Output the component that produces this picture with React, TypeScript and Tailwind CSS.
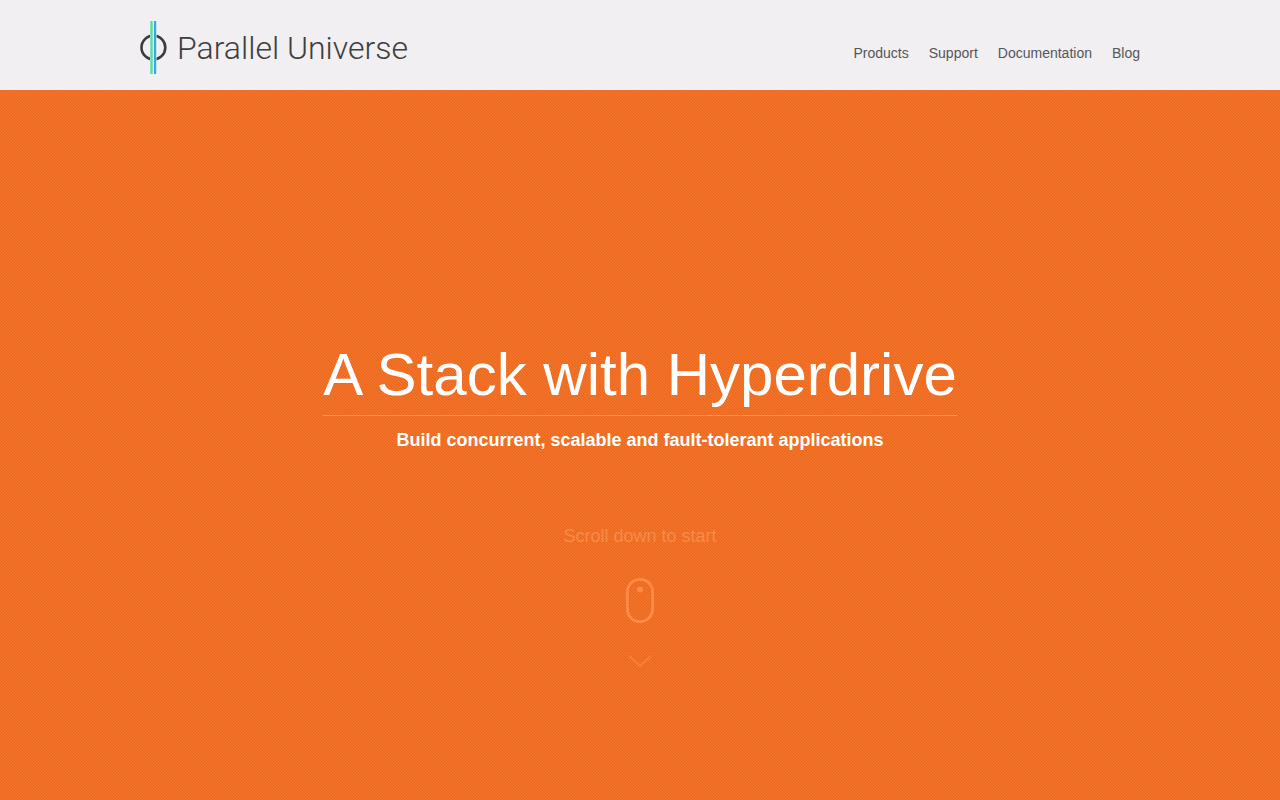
const navLinks = [
  { label: "Products", href: "#products" },
  { label: "Support", href: "#support" },
  { label: "Documentation", href: "#documentation" },
  { label: "Blog", href: "#blog" },
];

const Logo = () => (
  <a href="#home" className="flex items-center gap-2.5 text-[#3e3e3e]">
    <svg width="27" height="54" viewBox="0 0 27 54" fill="none" aria-hidden="true">
      <circle cx="13.4" cy="26.5" r="11.9" stroke="#3c3c3c" strokeWidth="2.6" />
      <rect x="10" y="0" width="6.6" height="53" fill="#f3f2f4" />
      <rect x="10.3" y="0" width="2.4" height="53" fill="#4fe0a4" />
      <rect x="14" y="0" width="2.2" height="53" fill="#35aadc" />
    </svg>
    <span className="whitespace-nowrap font-['Roboto',sans-serif] text-[32px] leading-9 font-light">
      Parallel Universe
    </span>
  </a>
);

const Header = () => (
  <header className="bg-[#f1eff2] px-5">
    <div className="mx-auto flex min-h-[90px] max-w-[1000px] items-center justify-between pt-1.5">
      <Logo />
      <nav className="flex gap-5 pt-2.5 text-sm text-[#55555b]">
        {navLinks.map((link) => (
          <a key={link.label} href={link.href} className="hover:underline">
            {link.label}
          </a>
        ))}
      </nav>
    </div>
  </header>
);

const Hero = () => (
  <main className="flex flex-1 flex-col items-center bg-[#f57322] bg-[linear-gradient(45deg,#e26627_25%,transparent_25%,transparent_58%,#e26627_58%,#e26627_75%,transparent_75%)] bg-[length:3px_3px] px-5 pt-[252px] pb-20 text-center text-white">
    <h1 className="border-b border-[#f79447] pb-[7px] text-[60px] leading-[66px]">
      A Stack with Hyperdrive
    </h1>
    <p className="mt-2.5 text-lg font-bold">
      Build concurrent, scalable and fault-tolerant applications
    </p>
    <p className="mt-17 text-lg text-[#f58c48]">Scroll down to start</p>
    <svg
      className="mt-7"
      width="28"
      height="45"
      viewBox="0 0 28 45"
      fill="none"
      aria-hidden="true"
    >
      <rect x="1.4" y="1.4" width="25.2" height="42.2" rx="12.6" stroke="#ff8b49" strokeWidth="2.8" />
      <circle cx="14" cy="11.5" r="3" fill="#ff8b49" />
    </svg>
    <svg
      className="mt-8"
      width="24"
      height="14"
      viewBox="0 0 24 14"
      fill="none"
      aria-hidden="true"
    >
      <path d="M1 1 L12 11 L23 1" stroke="#f77c37" strokeWidth="2.6" />
    </svg>
  </main>
);

const App = () => (
  <div className="flex min-h-screen flex-col font-['Liberation_Sans',Arial,sans-serif]">
    <Header />
    <Hero />
  </div>
);

export default App;
